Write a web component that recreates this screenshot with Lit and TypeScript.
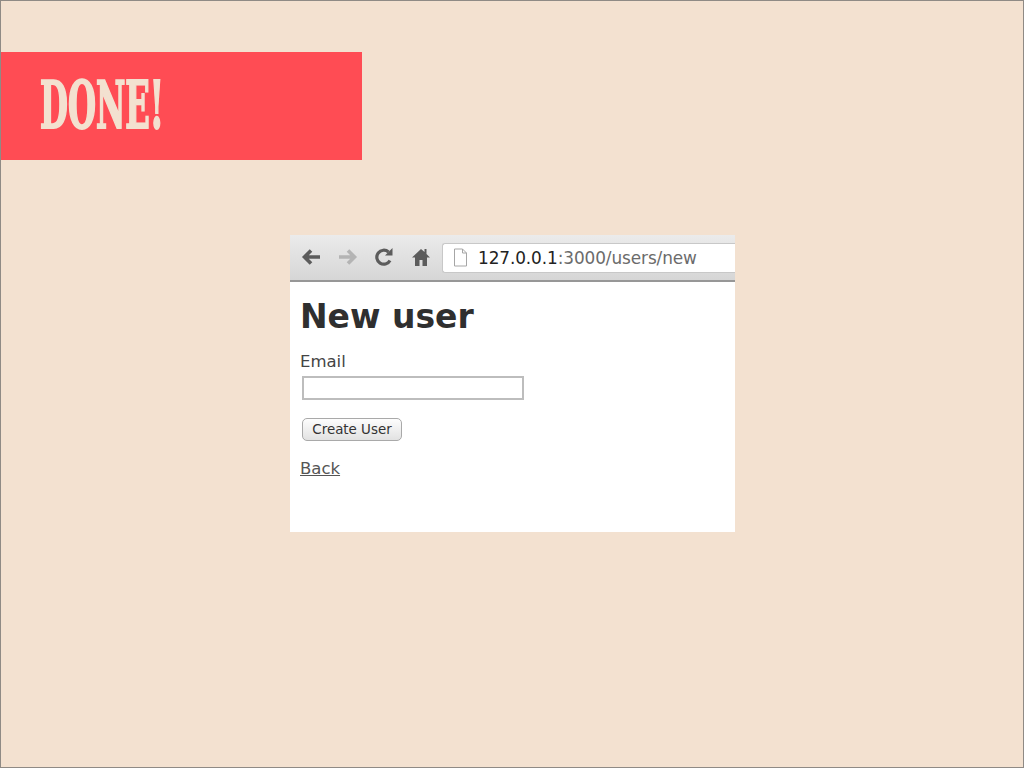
import { LitElement, html, css } from "lit";
import { customElement } from "lit/decorators.js";

@customElement("app-root")
export class AppRoot extends LitElement {
  static styles = css`
    :host { display: block; width: 1024px; height: 768px; overflow: hidden; }
    .slide { box-sizing: border-box; width: 1024px; height: 768px; background: #f3e1d0; border: 1px solid #8f8a85; padding-top: 51px; }
    .banner { width: 361px; height: 108px; background: #ff4c54; display: flex; align-items: center; padding-left: 39px; box-sizing: border-box; }
    .done { font-family: "DejaVu Serif Condensed", "DejaVu Serif", serif; font-weight: 700; font-size: 65px; line-height: 1; color: #f3e1d0; -webkit-text-stroke: 2px #f3e1d0; transform: scaleX(0.55); transform-origin: left center; letter-spacing: 0; white-space: nowrap; margin-top: -2px; }
    .shot { width: 445px; height: 297px; margin: 75px 0 0 289px; background: #fff; display: flex; flex-direction: column; overflow: hidden; font-family: "DejaVu Sans", sans-serif; }
    .toolbar { height: 47px; box-sizing: border-box; background: linear-gradient(#ebebeb, #d6d6d6); border-bottom: 2px solid #979797; display: flex; align-items: center; padding: 0 0 0 11px; gap: 11.500px; }
    .nav { display: flex; align-items: center; gap: 16.500px; margin-top: -1px; }
    .nav svg { display: block; flex: none; }
    .url { flex: 1; height: 30px; box-sizing: border-box; background: #fff; border: 1px solid #c8c8c8; border-right: 0; border-radius: 3px 0 0 3px; display: flex; align-items: center; padding-left: 10px; gap: 10px; font-size: 16.900px; color: #222; white-space: nowrap; letter-spacing: -0.100px; }
    .url span { color: #6b6b6b; }
    .page { padding: 0 0 0 10px; color: #333; display: flex; flex-direction: column; align-items: flex-start; }
    h1 { margin: 15px 0 0; font-size: 33px; line-height: 40px; font-weight: 700; font-family: "DejaVu Sans", sans-serif; color: #2f2f2f; letter-spacing: 0; }
    .label { margin-top: 15px; font-size: 16.500px; line-height: 20px; color: #444; }
    .input { margin: 4px 0 0 2px; width: 222px; height: 24px; box-sizing: border-box; border: 2px solid #bdbdbd; background: #fff; }
    .btn { margin: 18px 0 0 2px; width: 100px; height: 23px; box-sizing: border-box; border: 1.500px solid #a9a9a9; border-radius: 5px; background: linear-gradient(#fdfdfd, #e2e2e2); font-size: 13.400px; color: #333; display: flex; align-items: center; justify-content: center; }
    .back { margin-top: 18px; font-size: 16.500px; line-height: 20px; color: #555; text-decoration: underline; }
  `;

  render() {
    return html`<div class="slide">
      <div class="banner"><div class="done">DONE!</div></div>
      <div class="shot">
        <div class="toolbar">
          <div class="nav">
            <svg width="20" height="20" viewBox="0 0 20 20"><path d="M19 10H4M10 3.500 3.500 10l6.500 6.500" fill="none" stroke="#5c5c5c" stroke-width="3.600"/></svg>
            <svg width="20" height="20" viewBox="0 0 20 20"><path d="M1 10h15M10 3.500l6.500 6.500-6.500 6.500" fill="none" stroke="#b4b4b4" stroke-width="3.600"/></svg>
            <svg width="20" height="20" viewBox="0 0 20 20"><path d="M16 13.500A7 7 0 1 1 14.500 5" fill="none" stroke="#5c5c5c" stroke-width="3.200"/><path d="M11 8.500h7.500V1z" fill="#5c5c5c"/></svg>
            <svg width="20" height="20" viewBox="0 0 20 20"><path d="M10 2 1 10.500h3V19h4.500v-6h3v6H16v-8.500h3L15.500 7V2h-2v3z" fill="#5c5c5c"/></svg>
          </div>
          <div class="url">
            <svg width="15" height="19" viewBox="0 0 15 19"><path d="M1.500 1h8l4 4v13h-12zM9.500 1v4h4" fill="#fff" stroke="#a6a6a6"/></svg>
            <div>127.0.0.1<span>:3000/users/new</span></div>
          </div>
        </div>
        <div class="page">
          <h1>New user</h1>
          <div class="label">Email</div>
          <div class="input"></div>
          <div class="btn">Create User</div>
          <div class="back">Back</div>
        </div>
      </div>
    </div>`;
  }
}
